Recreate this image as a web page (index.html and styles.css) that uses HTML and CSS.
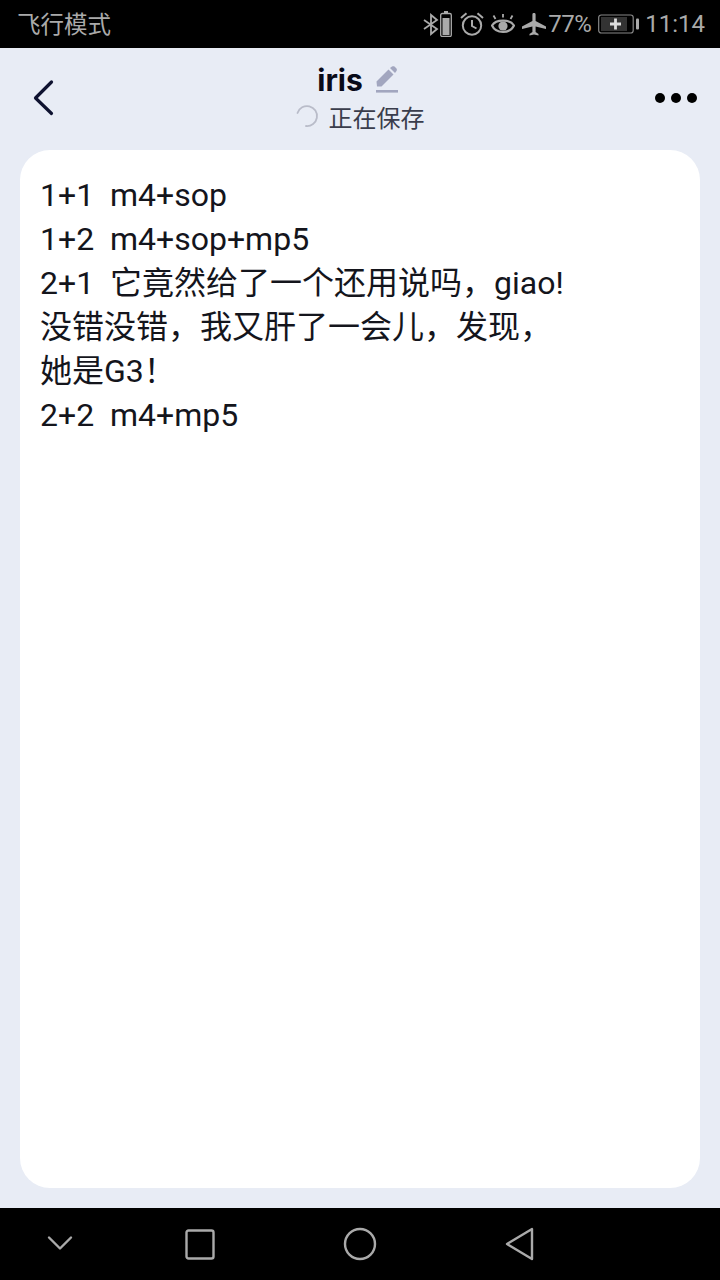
FILE: index.html
```html
<!DOCTYPE html>
<html lang="zh-CN">
<head>
    <meta charset="UTF-8">
    <meta name="viewport" content="width=device-width, initial-scale=1.0">
    <title>iris</title>
    <link rel="stylesheet" href="styles.css">
</head>
<body>

    <div class="status-bar">
        <span class="carrier">飞行模式</span>
        <div class="status-icons">
            <!-- bluetooth -->
            <svg class="icon-bt" width="16" height="24" viewBox="0 0 16 24" fill="none" stroke="#aaa" stroke-width="1.8">
                <path d="M1 8 L14 17 L8 22 V3 L14 8 L1 17"/>
            </svg>
            <!-- small battery -->
            <svg class="icon-batt" width="12" height="26" viewBox="0 0 12 26" fill="none">
                <rect x="4" y="0" width="4" height="2" fill="#aaa"/>
                <rect x="0.7" y="2.5" width="10.6" height="23" rx="1.5" stroke="#aaa" stroke-width="1.3"/>
                <rect x="2.5" y="7" width="7" height="17" fill="#aaa"/>
            </svg>
            <!-- alarm -->
            <svg class="icon-alarm" width="24" height="24" viewBox="0 0 24 24" fill="none" stroke="#aaa" stroke-width="2">
                <circle cx="12" cy="13.5" r="9.2"/>
                <path d="M12 8 V14 L16.5 16.5"/>
                <path d="M1 6 L6.5 1.2 M23 6 L17.5 1.2"/>
            </svg>
            <!-- eye -->
            <svg class="icon-eye" width="24" height="24" viewBox="0 0 24 24" fill="none" stroke="#aaa" stroke-width="2.2">
                <path d="M1 13.5 C5 7 19 7 23 13.5 C19 22 5 22 1 13.5 Z"/>
                <circle cx="12" cy="14" r="4.6" fill="#aaa" stroke="none"/>
                <path d="M4.5 7 L2.5 3.5 M12 5.5 V2 M19.5 7 L21.5 3.5" stroke-width="1.8"/>
            </svg>
            <!-- plane -->
            <svg class="icon-plane" width="24" height="24" viewBox="0 0 24 24" fill="#aaa">
                <path d="M10.4 2.5 C10.4 0.6 13.6 0.6 13.6 2.5 V9 L24 14.5 V17 L13.6 14.5 V20 L16.5 22 V23.5 L12 22.5 L7.5 23.5 V22 L10.4 20 V14.5 L0 17 V14.5 L10.4 9 Z"/>
            </svg>
            <span class="percent">77%</span>
            <!-- main battery -->
            <svg class="icon-main-batt" width="41" height="20" viewBox="0 0 41 20" fill="none">
                <rect x="0.7" y="1" width="34.5" height="18" rx="2.5" stroke="#888" stroke-width="1.2"/>
                <rect x="3" y="3" width="26" height="14" fill="#333"/>
                <rect x="38" y="4.5" width="3" height="11" rx="1" fill="#aaa"/>
                <path d="M12 10 H23 M17.5 4.5 V15.5" stroke="#ddd" stroke-width="2.8"/>
            </svg>
            <span class="clock">11:14</span>
        </div>
    </div>

    <div class="app">
        <header class="top-bar">
            <button class="back-button">
                <svg width="24" height="40" viewBox="0 0 24 40" fill="none" stroke="#0e1230" stroke-width="3.2" stroke-linecap="round" stroke-linejoin="round">
                    <path d="M19.5 4 L3.5 20 L19.5 35.5"/>
                </svg>
            </button>
            <div class="title-block">
                <div class="title-row">
                    <span class="title">iris</span>
                    <svg class="edit-icon" width="24" height="28" viewBox="0 0 24 28" fill="#a2a6bf">
                        <path d="M1.5 15.5 L13.5 3.5 L18.5 8.5 L6.5 20.5 L2 20.5 Z"/>
                        <path d="M15 2 L17 0.5 C18 0 18.5 0 19.5 0.5 L21.5 2.5 C22 3.5 22 4 21.5 5 L20 7 Z"/>
                        <rect x="1" y="24" width="22" height="2.6"/>
                    </svg>
                </div>
                <div class="save-row">
                    <svg class="spinner" width="24" height="24" viewBox="0 0 24 24" fill="none" stroke="#b9bcc9" stroke-width="1.8" stroke-linecap="round">
                        <path d="M2.5 9 A10 10 0 1 1 11 22"/>
                    </svg>
                    <span>正在保存</span>
                </div>
            </div>
            <div class="more">
                <span class="dot"></span>
                <span class="dot"></span>
                <span class="dot"></span>
            </div>
        </header>

        <main class="note">
            <p>1+1&nbsp;&nbsp;m4+sop</p>
            <p>1+2&nbsp;&nbsp;m4+sop+mp5</p>
            <p>2+1&nbsp;&nbsp;它竟然给了一个还用说吗，giao!</p>
            <p>没错没错，我又肝了一会儿，发现，</p>
            <p>她是G3！</p>
            <p>2+2&nbsp;&nbsp;m4+mp5</p>
        </main>
    </div>

    <nav class="nav-bar">
        <svg width="32" height="32" viewBox="0 0 32 32" fill="none" stroke="#aaa" stroke-width="2.4" stroke-linecap="round" stroke-linejoin="round">
            <path d="M5 9.5 L16 20.5 L27 9.5"/>
        </svg>
        <svg width="32" height="32" viewBox="0 0 32 32" fill="none" stroke="#aaa" stroke-width="2.4">
            <rect x="2.5" y="2.5" width="27" height="28" rx="2"/>
        </svg>
        <svg width="34" height="34" viewBox="0 0 34 34" fill="none" stroke="#aaa" stroke-width="2.4">
            <circle cx="17" cy="17" r="15"/>
        </svg>
        <svg width="32" height="34" viewBox="0 0 32 34" fill="none" stroke="#aaa" stroke-width="2.4" stroke-linejoin="round">
            <path d="M28 2 V32 L3 17 Z"/>
        </svg>
    </nav>

</body>
</html>
```

FILE: styles.css
```css
* {
    box-sizing: border-box;
}

body {
    margin: 0;
    width: 720px;
    height: 1280px;
    display: flex;
    flex-direction: column;
    font-family: 'Roboto', 'Noto Sans CJK SC', sans-serif;
    background-color: #e8ecf5;
    color: #0e1230;
    overflow: hidden;
}

.status-bar {
    height: 48px;
    flex: none;
    background-color: #000;
    color: #aaa;
    display: flex;
    align-items: center;
    justify-content: space-between;
    padding: 0 15px 0 17px;
}

.carrier {
    font-size: 23.5px;
    margin-top: -2px;
}

.status-icons {
    display: flex;
    align-items: center;
}

.icon-bt {
    margin-right: 1px;
}

.icon-batt {
    margin-right: 8px;
}

.icon-alarm {
    margin-right: 7px;
}

.icon-eye {
    margin-right: 7px;
}

.icon-plane {
    margin-right: 2px;
}

.percent {
    font-size: 24px;
    letter-spacing: -0.5px;
    margin-right: 7px;
}

.icon-main-batt {
    margin-right: 6px;
}

.clock {
    font-size: 24px;
}

.app {
    flex: 1;
    display: flex;
    flex-direction: column;
    padding: 0 20px 20px;
    min-height: 0;
}

.top-bar {
    height: 102px;
    flex: none;
    display: flex;
    align-items: center;
    justify-content: space-between;
    position: relative;
}

.back-button {
    border: none;
    background: none;
    padding: 0;
    margin-left: 12px;
    margin-top: -2px;
    display: flex;
}

.title-block {
    display: flex;
    flex-direction: column;
    align-items: center;
    position: absolute;
    left: 0;
    right: 0;
    top: 14px;
}

.title-row {
    display: flex;
    align-items: center;
    height: 36px;
    gap: 12px;
    margin-left: -4px;
}

.title {
    font-size: 30px;
    font-weight: 700;
    color: #080a18;
    font-family: 'Inter', 'Roboto', sans-serif;
}

.edit-icon {
    margin-top: -1px;
}

.save-row {
    display: flex;
    align-items: center;
    gap: 10px;
    height: 36px;
    font-size: 24px;
    color: #3a3d4c;
    margin-left: -1px;
}

.more {
    display: flex;
    gap: 6px;
    margin-right: 3px;
    margin-top: -2px;
}

.dot {
    width: 10px;
    height: 10px;
    border-radius: 50%;
    background-color: #000;
}

.note {
    flex: 1;
    background-color: #fff;
    border-radius: 30px;
    padding: 23px 20px;
    font-size: 32px;
    line-height: 44px;
    color: #14151c;
}

.note p {
    margin: 0;
}

.nav-bar {
    height: 72px;
    flex: none;
    background-color: #000;
    display: grid;
    grid-template-columns: 120px repeat(3, 160px);
    align-items: center;
    justify-items: center;
}
```
